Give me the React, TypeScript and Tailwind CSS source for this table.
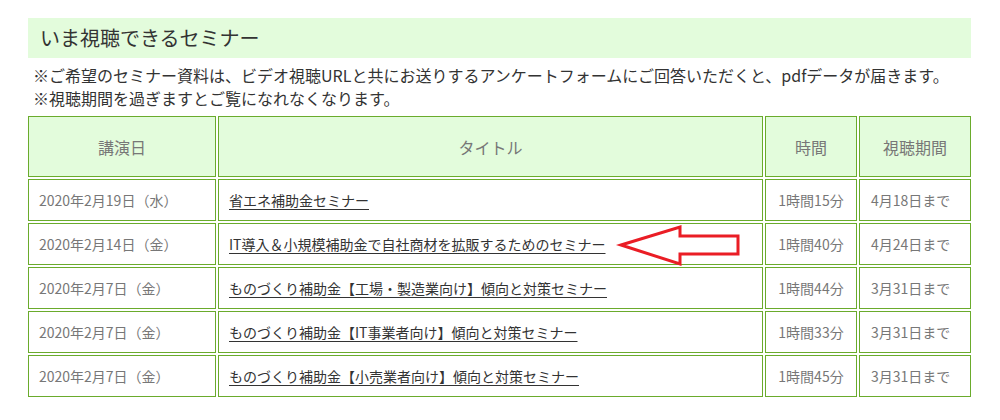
import React from "react";

interface Seminar {
  date: string;
  title: string;
  length: string;
  until: string;
}

const seminars: Seminar[] = [
  { date: "2020年2月19日（水）", title: "省エネ補助金セミナー", length: "1時間15分", until: "4月18日まで" },
  { date: "2020年2月14日（金）", title: "IT導入＆小規模補助金で自社商材を拡販するためのセミナー", length: "1時間40分", until: "4月24日まで" },
  { date: "2020年2月7日（金）", title: "ものづくり補助金【工場・製造業向け】傾向と対策セミナー", length: "1時間44分", until: "3月31日まで" },
  { date: "2020年2月7日（金）", title: "ものづくり補助金【IT事業者向け】傾向と対策セミナー", length: "1時間33分", until: "3月31日まで" },
  { date: "2020年2月7日（金）", title: "ものづくり補助金【小売業者向け】傾向と対策セミナー", length: "1時間45分", until: "3月31日まで" },
];

const font = { fontFamily: '"Noto Sans CJK JP", "Noto Sans", sans-serif' };

const App: React.FC = () => {
  return (
    <div className="relative w-[1000px] h-[420px] bg-white overflow-hidden" style={font}>
      <div className="pt-[18px] pl-[28px] w-[971px]">
        {/* Heading */}
        <div className="h-[40px] bg-[#e3fcdc] px-[12px] flex items-center text-[20px] text-[#333]">
          いま視聴できるセミナー
        </div>

        {/* Notes */}
        <div className="mt-[6px] pl-[5px] text-[16px] leading-[23px] text-[#333] whitespace-nowrap">
          <p>※ご希望のセミナー資料は、ビデオ視聴URLと共にお送りするアンケートフォームにご回答いただくと、pdfデータが届きます。</p>
          <p>※視聴期間を過ぎますとご覧になれなくなります。</p>
        </div>

        {/* Table */}
        <table className="mt-[4px] -ml-[2px] w-[947px] table-fixed border-separate border-spacing-[2px] text-[14px]">
          <colgroup>
            <col className="w-[188px]" />
            <col className="w-[545px]" />
            <col className="w-[92px]" />
            <col className="w-[112px]" />
          </colgroup>
          <thead>
            <tr className="h-[61px]">
              {["講演日", "タイトル", "時間", "視聴期間"].map((h) => (
                <th
                  key={h}
                  className="bg-[#e3fcdc] border border-[#6aab2c] text-center font-normal text-[16px] text-[#777]"
                >
                  {h}
                </th>
              ))}
            </tr>
          </thead>
          <tbody>
            {seminars.map((s, i) => (
              <tr key={i} className="h-[42px]">
                <td className="border border-[#6aab2c] pl-[10px] text-[#777] whitespace-nowrap">{s.date}</td>
                <td className="border border-[#6aab2c] pl-[10px] whitespace-nowrap">
                  <a href="#" className="text-[#333] underline underline-offset-[3px]">
                    {s.title}
                  </a>
                </td>
                <td className="border border-[#6aab2c] text-center text-[#777] whitespace-nowrap">{s.length}</td>
                <td className="border border-[#6aab2c] pl-[11px] text-[#777] whitespace-nowrap">{s.until}</td>
              </tr>
            ))}
          </tbody>
        </table>
      </div>

      {/* Red pointer arrow */}
      <svg className="absolute left-0 top-0 pointer-events-none" width="1000" height="420">
        <polygon
          points="621,245 680,227 680,236 738,236 738,254 680,254 680,264"
          fill="white"
          stroke="#ea1d25"
          strokeWidth="3"
          strokeLinejoin="miter"
        />
      </svg>
    </div>
  );
};

export default App;
